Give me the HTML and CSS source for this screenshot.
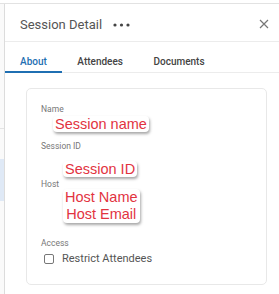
FILE: index.html
```html
<!DOCTYPE html>
<html lang="en">
<head>
    <meta charset="UTF-8">
    <meta name="viewport" content="width=device-width, initial-scale=1.0">
    <title>Session Detail</title>
    <link rel="stylesheet" href="styles.css">
</head>
<body>
    <div class="frame">
        <div class="side">
            <div class="side-gap"></div>
            <div class="side-row"></div>
            <div class="side-active"></div>
        </div>
        <div class="panel">
            <div class="header">
                <span class="title">Session Detail</span>
                <svg class="more" width="17" height="4" viewBox="0 0 17 4">
                    <circle cx="2" cy="2" r="1.6" fill="#444"/>
                    <circle cx="8.5" cy="2" r="1.6" fill="#444"/>
                    <circle cx="15" cy="2" r="1.6" fill="#444"/>
                </svg>
                <span class="close">
                    <svg width="10" height="10" viewBox="0 0 10 10">
                        <path d="M1 1 L9 9 M9 1 L1 9" stroke="#777" stroke-width="1.2" fill="none"/>
                    </svg>
                </span>
            </div>
            <div class="tabs">
                <div class="tab active">About</div>
                <div class="tab">Attendees</div>
                <div class="tab">Documents</div>
            </div>
            <div class="content">
                <div class="card">
                    <div class="label">Name</div>
                    <div class="note note-name">Session name</div>
                    <div class="label">Session ID</div>
                    <div class="note note-id">Session ID</div>
                    <div class="label">Host</div>
                    <div class="note note-host">Host Name<br>Host Email</div>
                    <div class="label">Access</div>
                    <label class="check">
                        <span class="box"></span>
                        Restrict Attendees
                    </label>
                </div>
            </div>
        </div>
    </div>
</body>
</html>
```

FILE: styles.css
```css
:root {
    --text-color: #555;
    --label-color: #777;
    --tab-blue: #1f6fb2;
    --note-red: #e2333f;
}

body {
    margin: 0;
    padding: 0;
    font-family: Roboto, 'Noto Sans', sans-serif;
    background: #fff;
    color: var(--text-color);
}

.frame {
    display: flex;
    height: 291px;
    border-top: 1px solid #e2e2e2;
    margin-top: 3px;
    box-sizing: border-box;
}

.side {
    width: 4px;
    border-right: 1px solid #dcdcdc;
    background: #fafafa;
    display: flex;
    flex-direction: column;
}

.side-gap {
    height: 124px;
}

.side-row {
    height: 30px;
    border-top: 1px solid #e4e4e4;
}

.side-active {
    height: 42px;
    background: #dfe9f6;
}

.panel {
    flex: 1;
    display: flex;
    flex-direction: column;
}

.header {
    display: flex;
    align-items: center;
    height: 38px;
    box-sizing: border-box;
    padding: 3px 10px 0 15px;
    border-bottom: 1px solid #ececec;
}

.title {
    font-size: 13px;
    color: #555;
}

.more {
    margin-left: 11px;
    margin-top: 1px;
}

.close {
    margin-left: auto;
    display: flex;
    align-items: center;
}

.tabs {
    display: flex;
    height: 30px;
    border-bottom: 1px solid #ececec;
    font-size: 10px;
    font-weight: 500;
}

.tab {
    display: flex;
    align-items: flex-end;
    padding: 0 15.5px 4px 15px;
    color: #444;
    border-bottom: 2px solid transparent;
    margin-bottom: -1px;
}

.tab.active {
    color: var(--tab-blue);
    border-bottom-color: var(--tab-blue);
}

.content {
    padding: 15px 12px 0 21px;
}

.card {
    border: 1px solid #e8e8e8;
    border-radius: 5px;
    height: 197px;
    box-sizing: border-box;
    padding: 15px 14px 0 14px;
    display: flex;
    flex-direction: column;
    align-items: flex-start;
}

.label {
    font-size: 8.5px;
    line-height: 10px;
    color: var(--label-color);
}

.note {
    color: var(--note-red);
    font-family: 'Liberation Sans', Arial, sans-serif;
    font-size: 14.5px;
    line-height: 16px;
    background: #fff;
    border-radius: 4px;
    box-shadow: 1px 2px 3px rgba(0, 0, 0, 0.35);
    padding: 0 2px;
}

.note-name {
    margin: 2px 0 9px 12px;
}

.note-id {
    margin: 10px 0 2px 22px;
}

.note-host {
    margin: 0 0 15px 22px;
    text-align: center;
    line-height: 17px;
}

.check {
    display: flex;
    align-items: center;
    gap: 8px;
    margin: 4px 0 0 3px;
    font-size: 11px;
    color: #555;
}

.box {
    width: 8px;
    height: 8px;
    border: 1.5px solid #777;
    border-radius: 2px;
}
```
